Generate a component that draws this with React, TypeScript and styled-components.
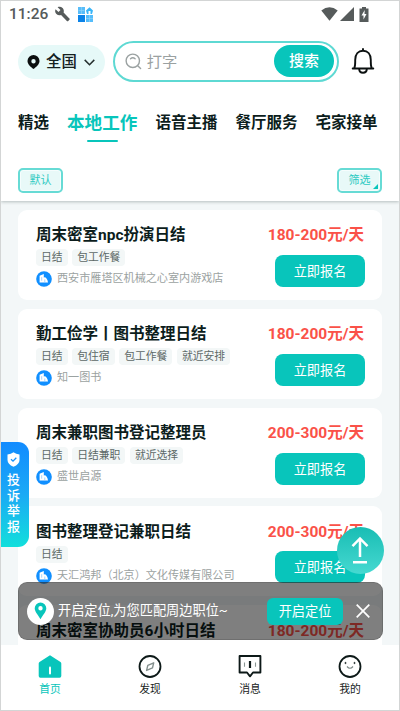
import React from 'react';
import styled, { createGlobalStyle } from 'styled-components';

const TEAL = '#08c5bb';

const GlobalStyle = createGlobalStyle`
  * { box-sizing: border-box; }
  body { margin: 0; background: #fff; }
  button { border: 0; padding: 0; font: inherit; cursor: pointer; }
  svg { display: block; flex: none; }
`;

const Screen = styled.main`
  position: relative;
  display: flex;
  flex-direction: column;
  width: 400px;
  height: 711px;
  overflow: hidden;
  border: 1px solid #d3d5d5;
  background: #fff;
  color: #0c1d1c;
  font-family: Roboto, 'Noto Sans CJK SC', sans-serif;
  white-space: nowrap;
`;

const Header = styled.header`
  position: relative;
  z-index: 1;
  flex: none;
  height: 200px;
  background: #fff;
  box-shadow: 0 1px 3px rgba(40, 60, 60, 0.3);
`;

const StatusBar = styled.div`
  display: flex;
  align-items: center;
  height: 26px;
  padding: 0 26px 0 8px;
  color: #565b5b;
`;

const Clock = styled.span`
  width: 45px;
  font-size: 15.5px;
  font-weight: 500;
  line-height: 26px;
`;

const StatusIcons = styled.div`
  display: flex;
  align-items: center;
  gap: 7px;
  &:last-child { margin-left: auto; gap: 2px; }
`;

const SearchRow = styled.div`
  display: flex;
  align-items: center;
  height: 42px;
  margin-top: 13px;
  padding: 0 24px 0 17px;
`;

const CityPicker = styled.button`
  display: flex;
  align-items: center;
  gap: 6px;
  width: 87px;
  height: 34px;
  margin: 2px 8px 0 0;
  padding-left: 9px;
  border-radius: 17px;
  background: #e6f9f8;
  color: #14201f;
  font-size: 15.4px;
  font-weight: 500;
  line-height: 34px;
  svg:last-child { margin-left: 1px; }
`;

const SearchBox = styled.div`
  display: flex;
  align-items: center;
  width: 227px;
  height: 41px;
  padding: 0 3px 0 10px;
  border: 2px solid #5ed9d3;
  border-radius: 21px;
  margin-right: 12px;
`;

const Placeholder = styled.span`
  flex: 1;
  margin: 1px 0 0 5px;
  color: #9aa1a1;
  font-size: 15.3px;
  line-height: 20px;
`;

const SearchButton = styled.button`
  width: 60px;
  height: 32px;
  border-radius: 16px;
  background: ${TEAL};
  color: #fff;
  font-size: 15px;
  font-weight: 500;
  line-height: 32px;
`;

const Tabs = styled.nav`
  display: flex;
  align-items: center;
  gap: 18px;
  height: 40px;
  margin-top: 21px;
  padding-left: 17px;
`;

const Tab = styled.span<{ $active?: boolean }>`
  position: relative;
  font-size: ${p => (p.$active ? 17.6 : 15.5)}px;
  font-weight: 700;
  line-height: 40px;
  color: ${p => (p.$active ? TEAL : '#0c1d1c')};
  &::after {
    content: '';
    display: ${p => (p.$active ? 'block' : 'none')};
    position: absolute;
    left: 20px;
    bottom: 1px;
    width: 31px;
    height: 2.5px;
    border-radius: 2px;
    background: ${TEAL};
  }
`;

const Filters = styled.div`
  display: flex;
  justify-content: space-between;
  margin-top: 25px;
  padding: 0 17px;
`;

const Filter = styled.button`
  position: relative;
  width: 45px;
  height: 25px;
  border: 2px solid #67dbd5;
  border-radius: 5px;
  background: #e8f9f8;
  box-shadow: inset 0 0 0 1px #f6fdfd;
  color: #2ccac2;
  font-size: 11px;
  line-height: 21px;
`;

const Corner = styled.svg`
  position: absolute;
  right: 2px;
  bottom: 2px;
`;

const List = styled.section`
  display: flex;
  flex-direction: column;
  gap: 8.8px;
  flex: 1;
  min-height: 0;
  overflow: hidden;
  padding: 9px 17px 0;
  background: #f3f7f8;
`;

const Card = styled.article`
  display: flex;
  flex: none;
  justify-content: space-between;
  height: 90px;
  padding: 14.4px 18px 0 18px;
  border-radius: 9px;
  background: #fff;
`;

const CardSide = styled.div`
  display: flex;
  flex-direction: column;
  align-items: flex-end;
`;

const Title = styled.h2`
  margin: 0;
  font-size: 15.5px;
  font-weight: 700;
  line-height: 22px;
`;

const Tags = styled.div`
  display: flex;
  gap: 4.6px;
  margin-top: 3px;
`;

const Tag = styled.span`
  height: 17px;
  padding: 0 5px;
  border-radius: 4px;
  background: #f3f7f7;
  color: #5d6967;
  font-size: 10.8px;
  line-height: 18px;
`;

const Company = styled.div`
  display: flex;
  align-items: center;
  gap: 5px;
  height: 18px;
  margin-top: 4px;
  color: #9ba2a1;
  font-size: 11.1px;
  line-height: 18px;
`;

const Price = styled.strong`
  color: #fa5148;
  font-size: 15.5px;
  font-weight: 700;
  line-height: 22px;
`;

const Apply = styled.button`
  width: 90px;
  height: 32px;
  margin: 8.600px -1px 0 0;
  border-radius: 8px;
  background: ${TEAL};
  color: #fff;
  font-size: 13.2px;
  line-height: 33px;
`;

const ReportTab = styled.button`
  position: absolute;
  z-index: 2;
  left: 0;
  top: 441px;
  display: flex;
  flex-direction: column;
  align-items: center;
  width: 28px;
  height: 105px;
  padding: 10px 3px 0 0;
  border-radius: 0 11px 11px 0;
  background: linear-gradient(#128bff, #1baaf5 50%, #12dfdb);
  color: #fff;
  font-size: 13px;
  font-weight: 500;
  line-height: 15.6px;
  span { width: 13px; margin-top: 5px; white-space: normal; }
`;

const TopButton = styled.button`
  position: absolute;
  z-index: 4;
  left: 335.500px;
  top: 525.500px;
  display: grid;
  place-items: center;
  width: 47px;
  height: 47px;
  border-radius: 50%;
  background: linear-gradient(#19bdb4, #46d9d1);
`;

const Notice = styled.aside`
  position: absolute;
  z-index: 3;
  left: 17px;
  top: 581px;
  display: flex;
  align-items: center;
  width: 365px;
  height: 58px;
  padding: 0 12px 0 8px;
  border: 1px solid rgba(80, 80, 80, 0.35);
  border-radius: 9px;
  background: rgba(0, 0, 0, 0.5);
  color: #fff;
  font-size: 13.2px;
`;

const NoticePin = styled.span`
  display: grid;
  place-items: center;
  width: 27px;
  height: 27px;
  margin-right: 4px;
  border-radius: 50%;
  background: #fff;
`;

const NoticeText = styled.span`
  flex: 1;
  line-height: 20px;
`;

const NoticeButton = styled.button`
  width: 76px;
  height: 27px;
  margin-right: 13px;
  border-radius: 6px;
  background: ${TEAL};
  color: #fff;
  font-size: 13.2px;
  line-height: 28px;
`;

const BottomNav = styled.nav`
  display: grid;
  flex: none;
  grid-template-columns: repeat(4, 100px);
  height: 65px;
  margin-left: -1px;
  padding-top: 10px;
  background: #fff;
`;

const NavItem = styled.a<{ $active?: boolean }>`
  display: flex;
  flex-direction: column;
  align-items: center;
  color: ${p => (p.$active ? TEAL : '#172322')};
  font-size: 10.8px;
  line-height: 18px;
  svg { margin-bottom: 2.500px; }
`;

const BuildingIcon = () => (
  <svg width="16" height="16" viewBox="0 0 16 16">
    <circle cx="8" cy="8" r="7.8" fill="#108fff" />
    <path d="M3.600 11.500V4.800l4.200-1.800V6.500q2-1 3 1.500.8.5 1.200 3.500z" fill="#fff" />
    <path d="M5.700 6.200v3.500M8.800 8.500v3" stroke="#8ac8ff" strokeWidth=".8" />
  </svg>
);

type Job = { title: string; price: string; tags: string[]; company: string };

const jobs: Job[] = [
  { title: '周末密室npc扮演日结', price: '180-200元/天', tags: ['日结', '包工作餐'], company: '西安市雁塔区机械之心室内游戏店' },
  { title: '勤工俭学丨图书整理日结', price: '180-200元/天', tags: ['日结', '包住宿', '包工作餐', '就近安排'], company: '知一图书' },
  { title: '周末兼职图书登记整理员', price: '200-300元/天', tags: ['日结', '日结兼职', '就近选择'], company: '盛世启源' },
  { title: '图书整理登记兼职日结', price: '200-300元/天', tags: ['日结'], company: '天汇鸿邦（北京）文化传媒有限公司' },
  { title: '周末密室协助员6小时日结', price: '180-200元/天', tags: [], company: '' },
];

const JobCard = ({ job }: { job: Job }) => (
  <Card>
    <div>
      <Title>{job.title}</Title>
      {job.tags.length > 0 && <Tags>{job.tags.map(t => <Tag key={t}>{t}</Tag>)}</Tags>}
      {job.company && <Company><BuildingIcon />{job.company}</Company>}
    </div>
    <CardSide>
      <Price>{job.price}</Price>
      {job.company && <Apply>立即报名</Apply>}
    </CardSide>
  </Card>
);

export default function App() {
  return (
    <>
      <GlobalStyle />
      <Screen>
        <Header>
          <StatusBar>
            <Clock>11:26</Clock>
            <StatusIcons>
              <svg width="17" height="16" viewBox="0 0 24 24" fill="currentColor">
                <path d="M22.7 19l-9.1-9.1c.9-2.3.4-5-1.500-6.900-2-2-5-2.400-7.400-1.300L9 6 6 9 1.600 4.700C.4 7.100.9 10.100 2.900 12.100c1.900 1.900 4.600 2.400 6.900 1.500l9.100 9.100c.4.4 1 .4 1.400 0l2.300-2.300c.5-.4.5-1.100.1-1.400z" />
              </svg>
              <svg width="16" height="15" viewBox="0 0 16 15">
                <path d="M0 0h7v7H0z" fill="#58bdf9" />
                <path d="M0 8h7v7H0z" fill="#0b83e8" />
                <path d="M8 8h7v7H8z" fill="#55bdfb" />
                <path d="M11.500.3l3.500 3.200-1 3.500h-1.500V4h-2v3H9L8 3.500z" fill="#38b5f8" />
                <path d="M.5 3.500h6M3.500 0v7M8 11.500h7M11.500 8v7" stroke="#8ed3fb" strokeWidth=".7" />
              </svg>
            </StatusIcons>
            <StatusIcons>
              <svg width="17" height="14" viewBox="0 0 17 14">
                <path d="M.3 3.600Q8.500-3 16.700 3.600L8.500 13.800z" fill="currentColor" />
              </svg>
              <svg width="14" height="14" viewBox="0 0 14 14">
                <path d="M14 0v14H0z" fill="currentColor" />
              </svg>
              <svg width="17" height="15" viewBox="0 0 17 15">
                <path d="M6 1.500V0h4v1.500h2.500V15h-9V1.500z" fill="currentColor" />
                <path d="M8.700 3L5.500 8.500h2v4l3-5.500h-2z" fill="#fff" />
              </svg>
            </StatusIcons>
          </StatusBar>
          <SearchRow>
            <CityPicker>
              <svg width="13" height="14" viewBox="0 0 13 14">
                <path fillRule="evenodd" d="M6.500 0A6 6 0 0 1 12.500 6c0 3.200-3.200 5.900-6 8C3.700 11.900.5 9.200.5 6a6 6 0 0 1 6-6zm0 4a2.200 2.200 0 1 0 0 4.400 2.200 2.200 0 0 0 0-4.400z" fill="#0b0f0f" />
              </svg>
              全国
              <svg width="11" height="7" viewBox="0 0 11 7" fill="none" stroke="#26302f" strokeWidth="1.500">
                <path d="M.7.9l4.800 4.800L10.300.9" />
              </svg>
            </CityPicker>
            <SearchBox>
              <svg width="17" height="17" viewBox="0 0 17 17" fill="none" stroke="#9ba2a2" strokeWidth="1.400" strokeLinecap="round">
                <circle cx="7.800" cy="7.800" r="6.700" />
                <path d="M12.700 12.700l2.900 2.900M5.500 5.700q2.300-2 4.600 0" />
              </svg>
              <Placeholder>打字</Placeholder>
              <SearchButton>搜索</SearchButton>
            </SearchBox>
            <svg width="24" height="28" viewBox="0 0 24 28" fill="none" stroke="#0b1010" strokeWidth="1.900" strokeLinejoin="round" strokeLinecap="round">
              <path d="M12 2v1.500M1.700 21.500h20.600M3.300 21c1.100-1.800.9-4 .9-8 0-6 3.200-9.200 7.800-9.200s7.800 3.200 7.800 9.200c0 4-.2 6.200.9 8M8.200 22c0 5 7.600 5 7.600 0" />
            </svg>
          </SearchRow>
          <Tabs>
            <Tab>精选</Tab>
            <Tab $active>本地工作</Tab>
            <Tab>语音主播</Tab>
            <Tab>餐厅服务</Tab>
            <Tab>宅家接单</Tab>
          </Tabs>
          <Filters>
            <Filter>默认</Filter>
            <Filter>
              筛选
              <Corner width="5" height="5" viewBox="0 0 5 5"><path d="M5 0v5H0z" fill={TEAL} /></Corner>
            </Filter>
          </Filters>
        </Header>

        <List>{jobs.map(job => <JobCard key={job.title} job={job} />)}</List>

        <ReportTab>
          <svg width="13" height="15" viewBox="0 0 13 15">
            <path d="M6.500.3Q9 2 12.500 2.500V8q0 4.300-6 6.700Q.5 12.300.5 8V2.500Q4 2 6.500.3z" fill="#fff" />
            <path d="M4 7.300l2 1.900 3.300-3.400" fill="none" stroke="#1692fa" strokeWidth="1.300" />
          </svg>
          <span>投诉举报</span>
        </ReportTab>

        <TopButton aria-label="顶部">
          <svg width="18" height="28" viewBox="0 0 18 28" fill="none" stroke="#fff" strokeWidth="2.500">
            <path d="M9 21V3M1.500 10.200L9 2.500l7.500 7.700M2 26.300h14" />
          </svg>
        </TopButton>

        <Notice>
          <NoticePin>
            <svg width="13" height="18" viewBox="0 0 13 18">
              <path fillRule="evenodd" d="M6.500.5a5.800 5.800 0 0 1 5.800 5.800c0 3.500-3.500 6.700-5.800 11C4.200 13 .7 9.800.7 6.300A5.800 5.800 0 0 1 6.500.5zm0 3.500a2.200 2.200 0 1 0 0 4.400 2.200 2.200 0 0 0 0-4.400z" fill={TEAL} />
            </svg>
          </NoticePin>
          <NoticeText>开启定位,为您匹配周边职位~</NoticeText>
          <NoticeButton>开启定位</NoticeButton>
          <svg width="14" height="14" viewBox="0 0 14 14" stroke="#fff" strokeWidth="1.700">
            <path d="M.7.7l12.600 12.600M13.300.7L.7 13.300" />
          </svg>
        </Notice>

        <BottomNav>
          <NavItem $active>
            <svg width="24" height="23" viewBox="0 0 24 23">
              <path d="M12 .3L22.500 7q.8.5.8 1.500V21q0 1.700-1.700 1.700H2.400Q.7 22.700.7 21V8.500Q.7 7.500 1.500 7z" fill={TEAL} />
              <path d="M12 12.500v6" stroke="#fff" strokeWidth="2" strokeLinecap="round" />
            </svg>
            首页
          </NavItem>
          <NavItem>
            <svg width="24" height="23" viewBox="0 0 24 23" fill="none">
              <circle cx="12" cy="11.500" r="10.500" stroke="#0d1918" strokeWidth="1.800" />
              <path d="M15.700 7.800l-1.200 5-5.900 2.600 1.200-5z" stroke="#84908e" strokeWidth="1.400" strokeLinejoin="round" />
            </svg>
            发现
          </NavItem>
          <NavItem>
            <svg width="24" height="23" viewBox="0 0 24 23" fill="none" stroke="#0d1918" strokeLinejoin="round">
              <path d="M1.600 1h20.800v16.500H15l-3 3.800-3-3.800H1.600z" strokeWidth="1.900" />
              <path d="M12 6v7" strokeWidth="2.200" />
              <path d="M6.500 7.500v4.200M17.500 7.500v4.200" stroke="#8b9694" strokeWidth="1.100" />
            </svg>
            消息
          </NavItem>
          <NavItem>
            <svg width="24" height="23" viewBox="0 0 24 23" fill="none" stroke="#0d1918">
              <circle cx="12" cy="11.500" r="10.500" strokeWidth="1.800" />
              <path d="M9 11.500q3 3.500 6 0" stroke="#7b8785" strokeWidth="1.200" />
              <circle cx="7.500" cy="8" r=".6" />
              <circle cx="16.500" cy="8" r=".6" />
            </svg>
            我的
          </NavItem>
        </BottomNav>
      </Screen>
    </>
  );
}
